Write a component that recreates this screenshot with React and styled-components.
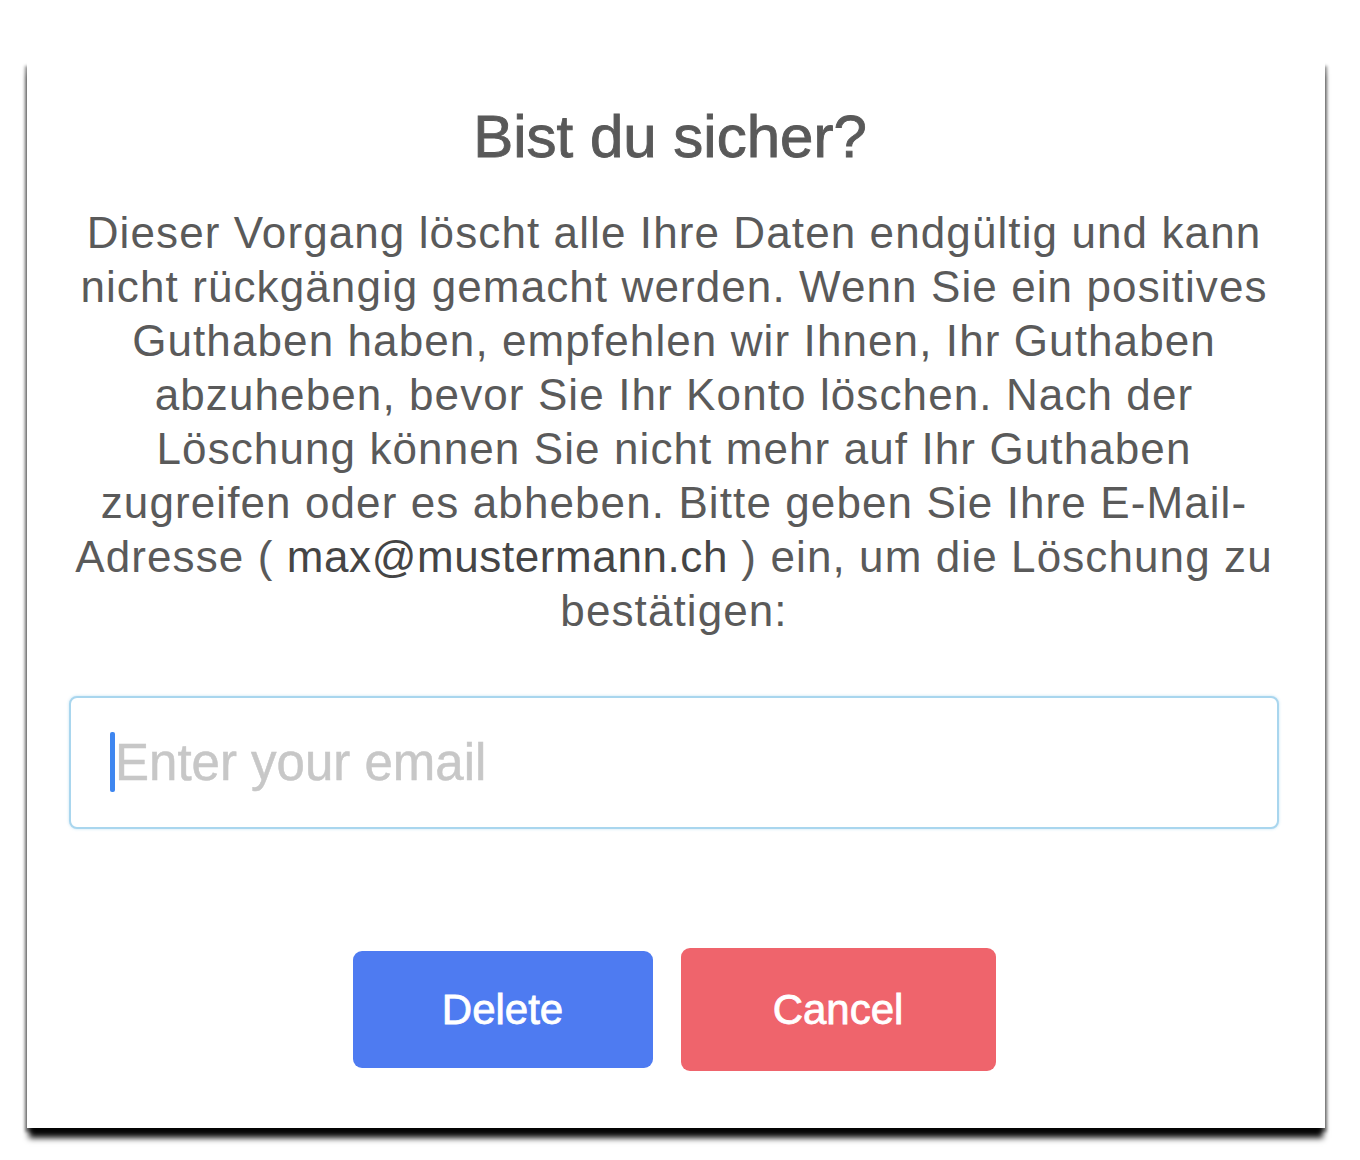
import React from 'react'
import styled, { createGlobalStyle } from 'styled-components'

const GlobalStyle = createGlobalStyle`
  html, body {
    margin: 0;
    padding: 0;
    background: #fff;
  }
  body {
    font-family: "Liberation Sans", Arial, Helvetica, sans-serif;
  }
`

const Page = styled.div`
  padding: 60px 0 30px 27px;
  width: 1298px;
`

const Dialog = styled.div`
  background: #fff;
  padding: 40px 46px 57px 42px;
  box-shadow:
    0 12px 6px -2px rgba(0, 0, 0, 0.95),
    -3px 5px 3px -1px rgba(0, 0, 0, 0.45),
    3px 5px 3px -1px rgba(0, 0, 0, 0.45);
  display: flex;
  flex-direction: column;
  align-items: stretch;
`

const Title = styled.h2`
  margin: 0;
  padding-right: 8px;
  font-size: 60px;
  line-height: 74px;
  font-weight: 400;
  color: #595959;
  -webkit-text-stroke: 0.9px #595959;
  text-align: center;
`

const Message = styled.p`
  margin: 32px 0 0;
  font-size: 44px;
  line-height: 54px;
  letter-spacing: 1.1px;
  color: #5a5a5a;
  text-align: center;
  white-space: nowrap;
`

const Email = styled.span`
  color: #454545;
  letter-spacing: 0.6px;
`

const Field = styled.div`
  position: relative;
  margin-top: 58px;
`

const Input = styled.input`
  box-sizing: border-box;
  width: 100%;
  height: 133px;
  padding: 0 40px 0 44px;
  border: 2px solid #a9d6ee;
  border-radius: 8px;
  box-shadow: 0 0 3px rgba(120, 190, 230, 0.45);
  outline: none;
  font-family: inherit;
  font-size: 51px;
  color: #333;
  background: #fff;

  &::placeholder {
    color: #c7c7c7;
    -webkit-text-stroke: 0.5px #c7c7c7;
  }
`

const Caret = styled.span`
  position: absolute;
  left: 41px;
  top: 36px;
  width: 5px;
  height: 60px;
  border-radius: 2px;
  background: #3e86f0;
`

const Actions = styled.div`
  display: flex;
  justify-content: center;
  align-items: center;
  gap: 28px;
  margin-top: 119px;
`

const Button = styled.button`
  box-sizing: border-box;
  width: ${(p) => p.w}px;
  height: ${(p) => p.h}px;
  border: none;
  border-radius: 9px;
  background: ${(p) => p.bg};
  color: #fff;
  font-family: inherit;
  font-size: 42px;
  -webkit-text-stroke: 0.8px #fff;
  cursor: pointer;
`

export default function App() {
  return (
    <>
      <GlobalStyle />
      <Page>
        <Dialog>
          <Title>Bist du sicher?</Title>
          <Message>
            Dieser Vorgang löscht alle Ihre Daten endgültig und kann<br />
            nicht rückgängig gemacht werden. Wenn Sie ein positives<br />
            Guthaben haben, empfehlen wir Ihnen, Ihr Guthaben<br />
            abzuheben, bevor Sie Ihr Konto löschen. Nach der<br />
            Löschung können Sie nicht mehr auf Ihr Guthaben<br />
            zugreifen oder es abheben. Bitte geben Sie Ihre E-Mail-<br />
            Adresse ( <Email>max@mustermann.ch</Email> ) ein, um die Löschung zu<br />
            bestätigen:
          </Message>
          <Field>
            <Input type="email" placeholder="Enter your email" />
            <Caret />
          </Field>
          <Actions>
            <Button w={300} h={117} bg="#4e7bf1">Delete</Button>
            <Button w={315} h={123} bg="#ef646c">Cancel</Button>
          </Actions>
        </Dialog>
      </Page>
    </>
  )
}
